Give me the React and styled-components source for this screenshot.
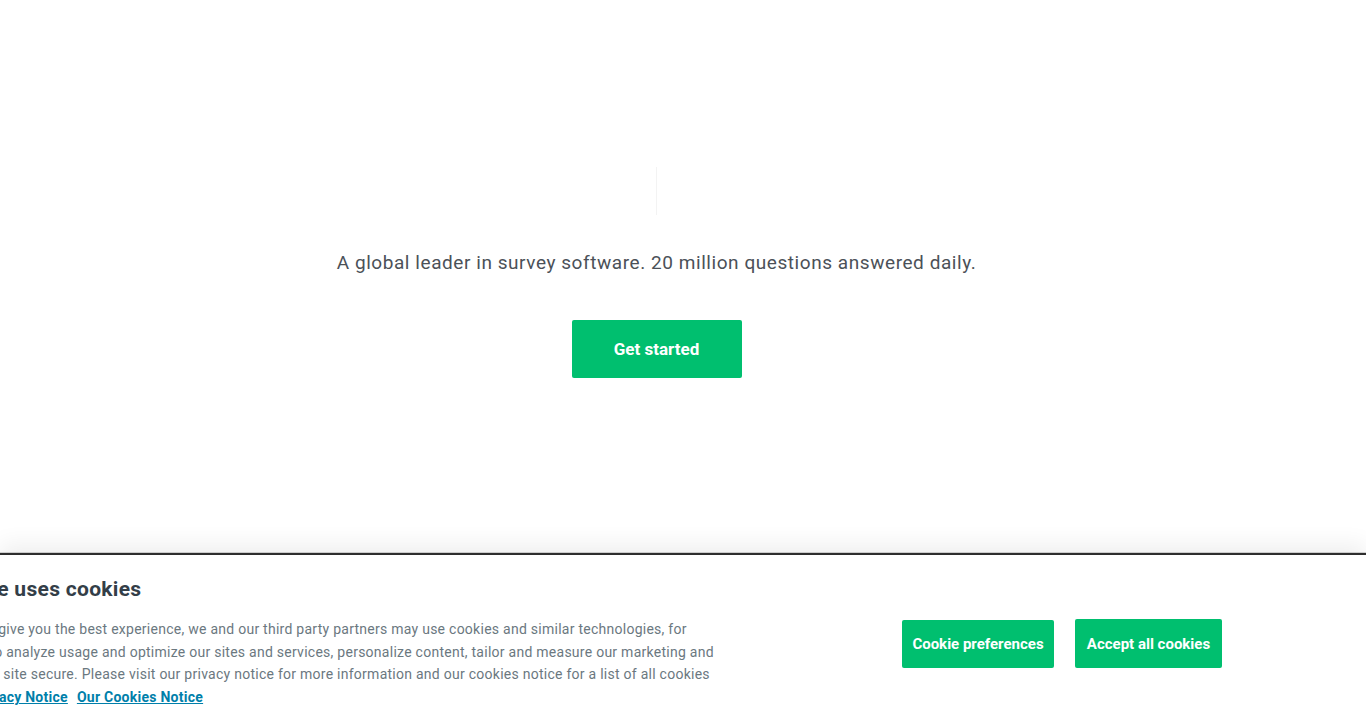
import React from "react";
import styled, { createGlobalStyle } from "styled-components";

const Global = createGlobalStyle`
  html, body { margin: 0; padding: 0; background: #ffffff; }
  body { font-family: "Roboto", "Liberation Sans", sans-serif; overflow: hidden; }
`;

const Page = styled.div`
  height: 100vh;
  display: flex;
  flex-direction: column;
  overflow: hidden;
`;

const Hero = styled.main`
  flex: 1;
  display: flex;
  flex-direction: column;
  align-items: center;
  padding-top: 167px;
  padding-right: 53px;
`;

const Placeholder = styled.div`
  width: 1px;
  height: 48px;
  background: #f3f3f3;
`;

const Tagline = styled.p`
  margin: 37px 0 0;
  font-size: 19px;
  line-height: 22px;
  color: #4b5158;
  letter-spacing: 0.56px;
`;

const PrimaryButton = styled.button`
  margin-top: ${(p) => p.$mt || 0}px;
  width: ${(p) => p.$w}px;
  height: ${(p) => p.$h}px;
  border: none;
  border-radius: 2px;
  background: #00bf6f;
  color: #ffffff;
  font-family: "Roboto", "Liberation Sans", sans-serif;
  font-weight: 700;
  font-size: ${(p) => p.$fs || 15}px;
  display: flex;
  align-items: center;
  justify-content: center;
  cursor: pointer;
  padding: 0;
`;

const Banner = styled.footer`
  flex: none;
  height: 165px;
  background: #ffffff;
  border-top: 2px solid #2e2e2e;
  box-shadow: 0 -8px 22px rgba(0, 0, 0, 0.07), 0 -1px 0 #d6d6d6;
  display: flex;
  align-items: flex-start;
  overflow: hidden;
`;

const BannerText = styled.div`
  flex: none;
  margin-left: -72px;
  padding-top: 22px;
`;

const Heading = styled.h2`
  margin: 0 0 0 -3px;
  font-size: 21px;
  line-height: 24px;
  font-weight: 700;
  letter-spacing: 0.3px;
  color: #333e48;
  white-space: nowrap;
`;

const Body = styled.p`
  margin: 17px 0 0;
  font-size: 14px;
  line-height: 22.7px;
  letter-spacing: 0.26px;
  color: #6b787f;
  white-space: nowrap;
`;

const Link = styled.a`
  color: #007faa;
  font-weight: 700;
  text-decoration: underline;
  margin-left: ${(p) => p.$ml || 0}px;
  margin-right: ${(p) => p.$mr || 0}px;
`;

const Actions = styled.div`
  display: flex;
  gap: 21px;
  margin-left: auto;
  margin-right: 144px;
  margin-top: 64px;
  align-items: center;
`;

export default function App() {
  return (
    <Page>
      <Global />
      <Hero>
        <Placeholder />
        <Tagline>
          A global leader in survey software. 20 million questions answered daily.
        </Tagline>
        <PrimaryButton $mt={46} $w={170} $h={58} $fs={17}>
          Get started
        </PrimaryButton>
      </Hero>
      <Banner>
        <BannerText>
          <Heading>This site uses cookies</Heading>
          <Body>
            In order to give you the best experience, we and our third party partners may use cookies and similar technologies, for
            <br />
            example, to analyze usage and optimize our sites and services, personalize content, tailor and measure our marketing and
            <br />
            to keep the site secure. Please visit our privacy notice for more information and our cookies notice for a list of all cookies
            <br />
            used. <Link href="#" $ml={6} $mr={9}>Privacy Notice</Link>
            <Link href="#">Our Cookies Notice</Link>
          </Body>
        </BannerText>
        <Actions>
          <PrimaryButton $w={152} $h={48}>Cookie preferences</PrimaryButton>
          <PrimaryButton $w={147} $h={49}>Accept all cookies</PrimaryButton>
        </Actions>
      </Banner>
    </Page>
  );
}
